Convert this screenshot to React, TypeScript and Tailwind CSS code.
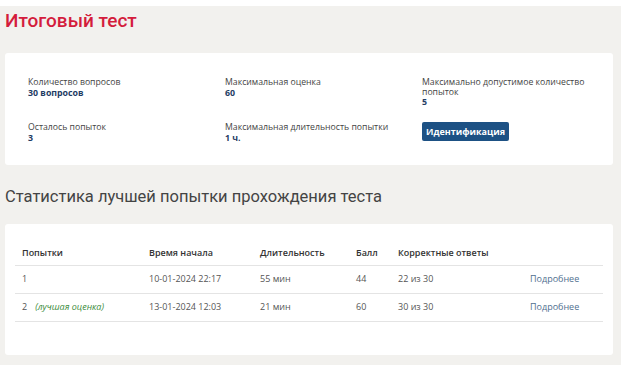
import React from 'react';

const info = [
  { label: 'Количество вопросов', value: '30 вопросов' },
  { label: 'Максимальная оценка', value: '60' },
  { label: 'Максимально допустимое количество попыток', value: '5', narrow: true },
  { label: 'Осталось попыток', value: '3' },
  { label: 'Максимальная длительность попытки', value: '1 ч.' },
];

const attempts = [
  { n: '1', best: false, start: '10-01-2024 22:17', dur: '55 мин', score: '44', correct: '22 из 30' },
  { n: '2', best: true, start: '13-01-2024 12:03', dur: '21 мин', score: '60', correct: '30 из 30' },
];

function InfoItem({ label, value, narrow }: { label: string; value: string; narrow?: boolean }) {
  return (
    <div className={narrow ? 'max-w-[168px]' : ''}>
      <div className="text-[8.7px] leading-[9.5px] text-[#444]">{label}</div>
      <div className="text-[8.8px] leading-[10px] font-bold text-[#1f3c64]">{value}</div>
    </div>
  );
}

export default function App() {
  return (
    <div className="w-[633px] h-[365px] bg-white overflow-hidden font-['Open_Sans',sans-serif]">
      <div className="mt-[6px] w-[621px] h-[359px] bg-[#f2f1ee] px-[5px] pr-[8px]">
        <h1 className="font-['Roboto',sans-serif] font-medium text-[19px] leading-[29px] text-[#d41c3c]">Итоговый тест</h1>

        <div className="mt-[18px] h-[112px] bg-white rounded-[3px] pt-[25px] pl-[23px] grid grid-cols-[197px_197px_1fr] grid-rows-[45px_auto]">
          {info.slice(0, 3).map((i) => (
            <InfoItem key={i.label} {...i} />
          ))}
          {info.slice(3).map((i) => (
            <InfoItem key={i.label} {...i} />
          ))}
          <div>
            <button className="block -mt-[1px] h-[19px] w-[87px] rounded-[2px] bg-[#1d5184] text-white text-[9px] font-bold">
              Идентификация
            </button>
          </div>
        </div>

        <h2 className="mt-[20px] font-['Roboto',sans-serif] text-[16.5px] leading-[24px] text-[#444]">
          Статистика лучшей попытки прохождения теста
        </h2>

        <div className="mt-[15px] h-[131px] bg-white rounded-[3px] px-[10px] pt-[17px]">
          <table className="w-full table-fixed border-collapse text-[9px] text-[#555]">
            <colgroup>
              <col className="w-[127px]" />
              <col className="w-[111px]" />
              <col className="w-[96px]" />
              <col className="w-[42px]" />
              <col className="w-[132px]" />
              <col />
            </colgroup>
            <thead>
              <tr className="h-[24px] border-b border-[#e4e4e4] text-left text-[#333]">
                <th className="pl-[7px] font-semibold">Попытки</th>
                <th className="pl-[7px] font-semibold">Время начала</th>
                <th className="pl-[7px] font-semibold">Длительность</th>
                <th className="pl-[7px] font-semibold">Балл</th>
                <th className="pl-[7px] font-semibold">Корректные ответы</th>
                <th />
              </tr>
            </thead>
            <tbody>
              {attempts.map((a) => (
                <tr key={a.n} className="h-[28px] border-b border-[#e4e4e4]">
                  <td className="pl-[7px]">
                    {a.n}
                    {a.best && <span className="ml-[8px] italic text-[#3c8c3c]">(лучшая оценка)</span>}
                  </td>
                  <td className="pl-[7px]">{a.start}</td>
                  <td className="pl-[7px]">{a.dur}</td>
                  <td className="pl-[7px]">{a.score}</td>
                  <td className="pl-[7px]">{a.correct}</td>
                  <td className="pl-[7px] text-[#4f6f8f]">Подробнее</td>
                </tr>
              ))}
            </tbody>
          </table>
        </div>
      </div>
    </div>
  );
}
